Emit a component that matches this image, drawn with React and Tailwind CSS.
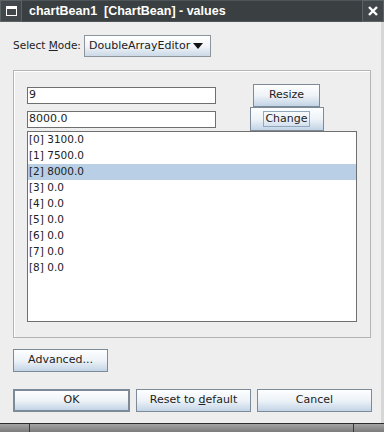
import React from "react";

const values = ["3100.0", "7500.0", "8000.0", "0.0", "0.0", "0.0", "0.0", "0.0", "0.0"];

const btn =
  "flex items-center justify-center border border-[#7d8a97] bg-gradient-to-b from-[#fdfeff] via-[#eef3f8] to-[#c3d4e6] text-[#222222] whitespace-nowrap";

export default function App() {
  return (
    <div
      className="w-[384px] h-[432px] bg-[#eeeeee] flex flex-col overflow-hidden text-[11px] text-[#222222]"
      style={{ fontFamily: '"DejaVu Sans", sans-serif' }}
    >
      {/* Title bar */}
      <div className="h-[22px] bg-[#3a3f41] flex shrink-0">
        <div className="w-[22px] h-full flex items-center justify-center border border-[#5c6365] bg-[#41474a]">
          <div className="w-[11px] h-[10px] border border-white border-t-[3px]" />
        </div>
        <div
          className="flex-1 flex items-center pl-[7px] text-white font-bold text-[12.5px] border-y border-[#4e5558] whitespace-pre"
          style={{ fontFamily: '"Liberation Sans", sans-serif' }}
        >
          chartBean1  [ChartBean] - values
        </div>
        <div className="w-[22px] h-full flex items-center justify-center border border-[#5c6365] bg-[#41474a]">
          <svg width="12" height="12" viewBox="0 0 12 12">
            <path d="M2 2 L10 10 M10 2 L2 10" stroke="white" strokeWidth="2.4" />
          </svg>
        </div>
      </div>

      <div className="flex-1 flex border-r-[3px] border-[#d6d6d6]">
        <div className="flex-1 flex flex-col pl-[13px] pr-[9px]">
          {/* Mode row */}
          <div className="mt-[13px] h-[22px] flex items-center">
            <span className="w-[71px] shrink-0 whitespace-nowrap text-[10.5px]">
              Select <span className="underline">M</span>ode:
            </span>
            <div className="w-[127px] h-[22px] shrink-0 flex items-center justify-between pl-[4px] pr-[7px] border border-[#8c949c] bg-gradient-to-b from-[#ffffff] via-[#f1f5f9] to-[#cbd9e7]">
              <span>DoubleArrayEditor</span>
              <svg width="10" height="6" viewBox="0 0 10 6">
                <path d="M0 0 H10 L5 6 Z" fill="#111111" />
              </svg>
            </div>
          </div>

          {/* Values panel */}
          <div className="mt-[13px] h-[268px] w-[358px] border border-[#b4b4b4] shadow-[inset_1px_1px_0_#ffffff] pl-[13px] pr-[13px] pt-[13px] flex flex-col">
            <div className="h-[23px] flex items-center">
              <div className="w-[189px] h-[17px] bg-white border border-[#6f6f6f] flex items-center pl-[1px]">9</div>
              <div className="flex-1 flex justify-center">
                <div className={`${btn} w-[67px] h-[23px]`}>Resize</div>
              </div>
            </div>
            <div className="h-[24px] flex items-center">
              <div className="w-[189px] h-[17px] bg-white border border-[#6f6f6f] flex items-center pl-[1px]">8000.0</div>
              <div className="flex-1 flex justify-center">
                <div className={`${btn} w-[74px] h-[24px]`}>
                  <span className="border border-[#8fa7bf] px-[1px] leading-[14px]">Change</span>
                </div>
              </div>
            </div>
            <div className="h-[191px] bg-white border border-[#6f6f6f] flex flex-col text-[10.5px]">
              {values.map((v, i) => (
                <div
                  key={i}
                  className={`h-[16px] shrink-0 flex items-center pl-[1px] ${i === 2 ? "bg-[#b8cfe5]" : ""}`}
                >
                  [{i}] {v}
                </div>
              ))}
            </div>
          </div>

          <div className={`${btn} mt-[11px] w-[95px] h-[23px]`}>Advanced...</div>

          <div className="mt-[17px] flex gap-[6px] w-[359px]">
            <div className={`${btn} flex-1 h-[23px] border-2 border-[#4d5257]`}>OK</div>
            <div className={`${btn} flex-1 h-[23px]`}>
              <span>
                Reset to <span className="underline">d</span>efault
              </span>
            </div>
            <div className={`${btn} flex-1 h-[23px]`}>Cancel</div>
          </div>
        </div>
      </div>

      {/* Bottom frame edge */}
      <div className="h-[9px] shrink-0 border-t border-[#2d2d2d] bg-gradient-to-b from-[#a4a4a4] to-[#7c7c7c] flex">
        <div className="w-[30px] border-r border-[#3a3a3a]" />
        <div className="flex-1 border-r border-[#3a3a3a]" />
        <div className="w-[30px]" />
      </div>
    </div>
  );
}
